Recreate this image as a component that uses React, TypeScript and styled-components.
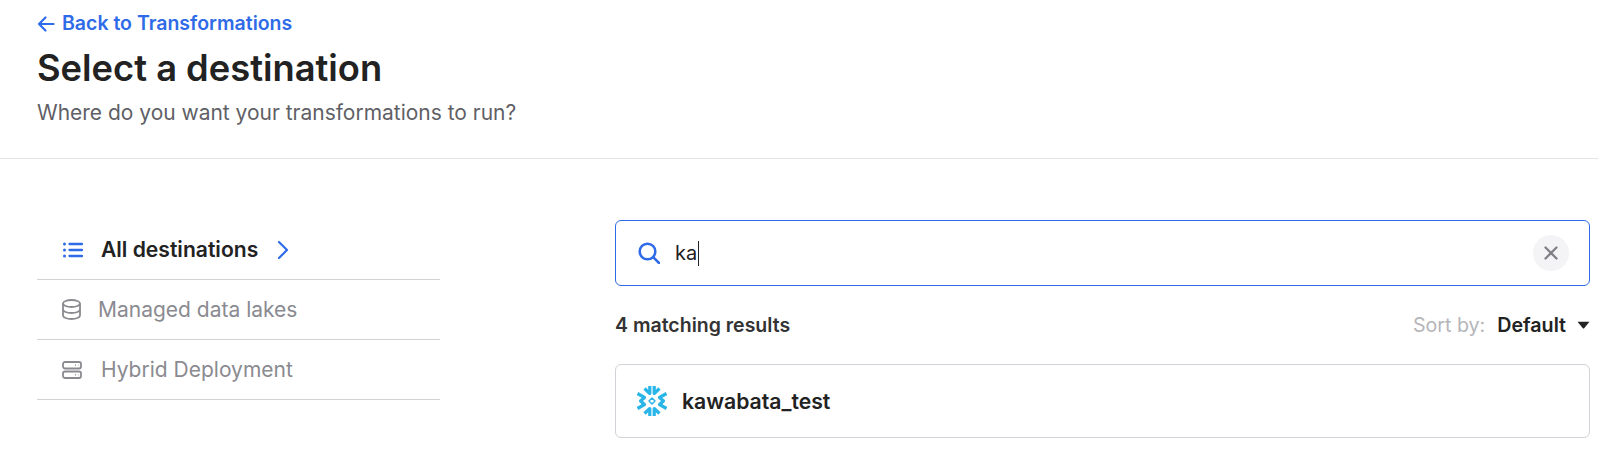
import React from "react";
import styled, { createGlobalStyle } from "styled-components";

const Global = createGlobalStyle`
  html, body { margin: 0; padding: 0; background: #fff; }
  body { font-family: Inter, "Liberation Sans", sans-serif; overflow: hidden; }
`;

const Page = styled.div`
  width: 1598px;
  height: 449px;
  overflow: hidden;
`;

const Header = styled.header`
  height: 159px;
  box-sizing: border-box;
  padding: 12px 37px 0;
  border-bottom: 1px solid #e3e3e6;
`;

const BackLink = styled.a`
  display: flex;
  align-items: center;
  gap: 7px;
  height: 23px;
  color: #2f6be8;
  font-size: 19.500px;
  font-weight: 600;
  line-height: 23px;
`;

const Title = styled.h1`
  margin: 11px 0 0;
  color: #222222;
  font-size: 36.300px;
  font-weight: 600;
  line-height: 44px;
`;

const Subtitle = styled.p`
  margin: 11px 0 0;
  color: #5f5f66;
  font-size: 20.980px;
  font-weight: 400;
  line-height: 24px;
`;

const Body = styled.main`
  display: flex;
  padding: 61px 8px 0 37px;
`;

const Sidebar = styled.nav`
  width: 403px;
  margin-right: 175px;
  flex: none;
`;

const NavRow = styled.div<{ $indent: number; $pad: number }>`
  display: flex;
  align-items: center;
  height: 60px;
  box-sizing: border-box;
  padding-left: ${(p) => p.$pad}px;
  border-bottom: 1px solid #d2d2d6;
  svg { flex: none; }
  span { margin-left: ${(p) => p.$indent}px; }
`;

const NavLabel = styled.span<{ $active?: boolean }>`
  color: ${(p) => (p.$active ? "#222222" : "#8a8a90")};
  font-size: ${(p) => (p.$active ? 21.100 : 21)}px;
  font-weight: ${(p) => (p.$active ? 600 : 400)};
`;

const Chevron = styled.svg`
  margin-left: 18px;
`;

const Content = styled.section`
  flex: 1;
  min-width: 0;
`;

const SearchBox = styled.div`
  display: flex;
  align-items: center;
  height: 66px;
  box-sizing: border-box;
  padding: 0 20px 0 22px;
  border: 1px solid #2f6be8;
  border-radius: 6px;
`;

const SearchText = styled.span`
  margin-left: 15px;
  color: #222222;
  font-size: 20px;
  line-height: 24px;
`;

const Caret = styled.i`
  display: inline-block;
  width: 1px;
  height: 25px;
  margin-left: 1px;
  background: #222222;
`;

const ClearButton = styled.div`
  display: flex;
  align-items: center;
  justify-content: center;
  width: 36px;
  height: 36px;
  margin-left: auto;
  border-radius: 50%;
  background: #f4f4f6;
`;

const ResultsBar = styled.div`
  display: flex;
  align-items: center;
  justify-content: space-between;
  height: 24px;
  margin-top: 27px;
`;

const Count = styled.span`
  color: #333333;
  font-size: 19.500px;
  font-weight: 600;
`;

const Sort = styled.div`
  display: flex;
  align-items: center;
  font-size: 19.650px;
`;

const SortLabel = styled.span`
  color: #b5b5ba;
`;

const SortValue = styled.span`
  margin: 0 11px 0 12px;
  color: #222222;
  font-weight: 600;
`;

const Card = styled.div`
  display: flex;
  align-items: center;
  gap: 14px;
  height: 74px;
  margin-top: 27px;
  box-sizing: border-box;
  padding: 0 20px;
  border: 1px solid #d2d2d8;
  border-radius: 6px;
`;

const CardName = styled.span`
  color: #222222;
  font-size: 21.200px;
  font-weight: 600;
`;

const Snowflake = () => (
  <svg width="32" height="32" viewBox="-16 -16 32 32" fill="none" stroke="#29b5e8" strokeLinejoin="round" strokeWidth="3.200">
    <path d="M-2.200 -15V-7.500L-7.500 -12.500" />
    <path d="M2.200 -15V-7.500L7.500 -12.500" />
    <path d="M-2.200 15V7.500L-7.500 12.500" />
    <path d="M2.200 15V7.500L7.500 12.500" />
    <path d="M-14.500 -7.500 -7.500 -3.500 -11.500 0 -7.500 3.500 -14.500 7.500" />
    <path d="M14.500 -7.500 7.500 -3.500 11.500 0 7.500 3.500 14.500 7.500" />
    <path d="M0 -3 3 0 0 3 -3 0Z" strokeWidth="1.500" />
  </svg>
);

export default function App() {
  return (
    <Page>
      <Global />
      <Header>
        <BackLink>
          <svg width="18" height="18" viewBox="0 0 18 18" fill="none" stroke="#2f6be8" strokeWidth="2.200" strokeLinecap="round" strokeLinejoin="round">
            <path d="M16.500 9H2M8.500 2.500 2 9l6.500 6.500" />
          </svg>
          Back to Transformations
        </BackLink>
        <Title>Select a destination</Title>
        <Subtitle>Where do you want your transformations to run?</Subtitle>
      </Header>
      <Body>
        <Sidebar>
          <NavRow $pad={26} $indent={18}>
            <svg width="20" height="16" viewBox="0 0 20 16" fill="none" stroke="#2f6be8" strokeWidth="2.300" strokeLinecap="round">
              <path d="M6.500 2H19M6.500 8H19M6.500 14H19" />
              <path d="M1.500 2h.01M1.500 8h.01M1.500 14h.01" strokeWidth="3" />
            </svg>
            <NavLabel $active>All destinations</NavLabel>
            <Chevron width="14" height="20" viewBox="0 0 14 20" fill="none" stroke="#2f6be8" strokeWidth="2.200" strokeLinecap="round" strokeLinejoin="round">
              <path d="M3 2l8 8-8 8" />
            </Chevron>
          </NavRow>
          <NavRow $pad={25} $indent={17}>
            <svg width="19" height="21" viewBox="0 0 19 21" fill="none" stroke="#8a8a90" strokeWidth="1.800">
              <path d="M1 4.500C1 2.500 4.800 1 9.500 1s8.500 1.500 8.500 3.500v12c0 2-3.800 3.500-8.500 3.500S1 18.500 1 16.500z" />
              <path d="M1 4.500C1 6.500 4.800 8 9.500 8S18 6.500 18 4.500M1 10.500c0 2 3.800 3.500 8.500 3.500S18 12.500 18 10.500" />
            </svg>
            <NavLabel>Managed data lakes</NavLabel>
          </NavRow>
          <NavRow $pad={25} $indent={19}>
            <svg width="20" height="18" viewBox="0 0 20 18" fill="none" stroke="#8a8a90" strokeWidth="1.800">
              <rect x="1" y="1" width="18" height="6.500" rx="2" />
              <rect x="1" y="10.500" width="18" height="6.500" rx="2" />
              <path d="M13 4.200h1M16 4.200h.5M13 13.800h1M16 13.800h.5" strokeWidth="1.300" />
            </svg>
            <NavLabel>Hybrid Deployment</NavLabel>
          </NavRow>
        </Sidebar>
        <Content>
          <SearchBox>
            <svg width="22" height="22" viewBox="0 0 22 22" fill="none" stroke="#2f6be8" strokeWidth="2.500" strokeLinecap="round">
              <circle cx="9.500" cy="9.500" r="7.800" />
              <path d="M15.200 15.200 21 21" />
            </svg>
            <SearchText>ka</SearchText>
            <Caret />
            <ClearButton>
              <svg width="14" height="14" viewBox="0 0 14 14" fill="none" stroke="#808086" strokeWidth="2.300" strokeLinecap="round">
                <path d="M1.500 1.500l11 11M12.500 1.500l-11 11" />
              </svg>
            </ClearButton>
          </SearchBox>
          <ResultsBar>
            <Count>4 matching results</Count>
            <Sort>
              <SortLabel>Sort by:</SortLabel>
              <SortValue>Default</SortValue>
              <svg width="13" height="8" viewBox="0 0 12 7" fill="#222222">
                <path d="M0.500 0.500h11L6.800 6.200a1 1 0 0 1-1.600 0z" />
              </svg>
            </Sort>
          </ResultsBar>
          <Card>
            <Snowflake />
            <CardName>kawabata_test</CardName>
          </Card>
        </Content>
      </Body>
    </Page>
  );
}
